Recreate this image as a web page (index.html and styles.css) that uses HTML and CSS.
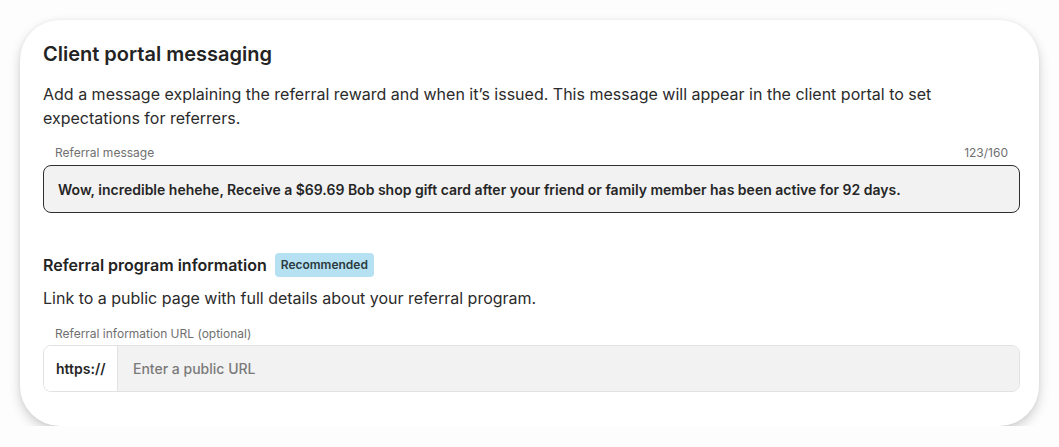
FILE: index.html
```html
<!DOCTYPE html>
<html lang="en">
<head>
<meta charset="utf-8">
<title>Client portal messaging</title>
<link rel="stylesheet" href="styles.css">
</head>
<body>
<section class="card">
  <h2 class="title">Client portal messaging</h2>
  <p class="desc">Add a message explaining the referral reward and when it’s issued. This message will appear in the client portal to set expectations for referrers.</p>
  <div class="field-head">
    <span class="label">Referral message</span>
    <span class="label">123/160</span>
  </div>
  <div class="message">Wow, incredible hehehe, Receive a $69.69 Bob shop gift card after your friend or family member has been active for 92 days.</div>

  <div class="sub-head">
    <h3 class="subtitle">Referral program information</h3>
    <span class="badge">Recommended</span>
  </div>
  <p class="desc desc-2">Link to a public page with full details about your referral program.</p>
  <div class="field-head field-head-2">
    <span class="label">Referral information URL (optional)</span>
  </div>
  <div class="url-group">
    <span class="prefix">https://</span>
    <span class="url-input">Enter a public URL</span>
  </div>
</section>
</body>
</html>
```

FILE: styles.css
```css
* { box-sizing: border-box; }
html, body {
  margin: 0;
  padding: 0;
  background: #fdfdfd;
}
body {
  font-family: Inter, "Noto Sans", sans-serif;
  color: #262626;
  padding: 20px 20px 0 20px;
}
.card {
  width: 1019px;
  height: 406px;
  background: #ffffff;
  border-radius: 40px;
  box-shadow: 0 5px 12px rgba(0, 0, 0, 0.18), 0 0 4px rgba(0, 0, 0, 0.05);
  padding: 20px 19px 0 23px;
}
.title {
  margin: 0;
  font-size: 20px;
  line-height: 28px;
  font-weight: 600;
  color: #232323;
}
.desc {
  margin: 14px 0 0 0;
  font-size: 16px;
  line-height: 24px;
  color: #2b2b2b;
  padding-right: 60px;
}
.field-head {
  display: flex;
  justify-content: space-between;
  margin-top: 15px;
  padding: 0 12px;
  height: 16px;
}
.label {
  font-size: 12px;
  line-height: 16px;
  color: #707070;
}
.message {
  margin-top: 4px;
  height: 48px;
  border: 1px solid #2f2f2f;
  border-radius: 8px;
  background: #f2f2f2;
  padding: 0 14px;
  display: flex;
  align-items: center;
  font-size: 14px;
  font-weight: 600;
  color: #262626;
}
.sub-head {
  margin-top: 40px;
  display: flex;
  align-items: center;
  gap: 8px;
  height: 24px;
}
.subtitle {
  margin: 0;
  font-size: 16px;
  line-height: 24px;
  font-weight: 600;
  color: #232323;
}
.badge {
  background: #b5e1f3;
  color: #2c3a40;
  font-size: 12px;
  line-height: 24px;
  font-weight: 600;
  padding: 0 6px;
  border-radius: 4px;
}
.desc-2 {
  margin-top: 9px;
}
.field-head-2 {
  margin-top: 16px;
}
.url-group {
  margin-top: 3px;
  height: 47px;
  border: 1px solid #e2e2e2;
  border-radius: 8px;
  display: flex;
  overflow: hidden;
}
.prefix {
  width: 74px;
  background: #ffffff;
  border-right: 1px solid #e2e2e2;
  display: flex;
  align-items: center;
  padding-left: 12px;
  font-size: 14px;
  font-weight: 600;
  color: #262626;
}
.url-input {
  flex: 1;
  background: #f2f2f2;
  display: flex;
  align-items: center;
  padding-left: 15px;
  font-size: 14px;
  font-weight: 500;
  color: #7a7a7a;
}
```
